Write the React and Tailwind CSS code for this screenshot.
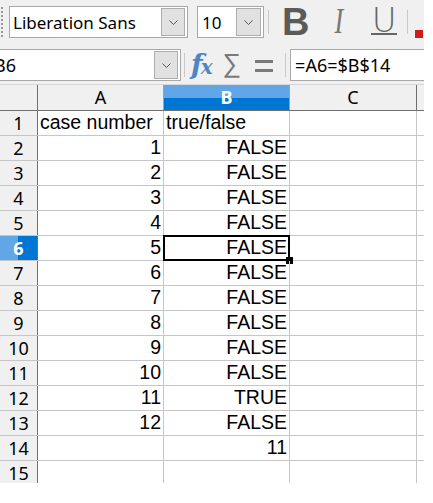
import React from 'react';

const Chevron = () => (
    <svg width="9" height="5" viewBox="0 0 9 5" fill="none">
        <path d="M0.5 0.5 L4.5 4.5 L8.5 0.5" stroke="#555" strokeWidth="1" />
    </svg>
);

const DropButton = ({ className }) => (
    <div className={`flex items-center justify-center bg-[#e1e1e1] border border-[#adadad] ${className}`}>
        <Chevron />
    </div>
);

const Sep = ({ className }) => <div className={`w-px bg-[#c8c8c8] ${className}`}></div>;

const rows = [
    ['case number', 'true/false'],
    ['1', 'FALSE'],
    ['2', 'FALSE'],
    ['3', 'FALSE'],
    ['4', 'FALSE'],
    ['5', 'FALSE'],
    ['6', 'FALSE'],
    ['7', 'FALSE'],
    ['8', 'FALSE'],
    ['9', 'FALSE'],
    ['10', 'FALSE'],
    ['11', 'TRUE'],
    ['12', 'FALSE'],
    ['', '11'],
    ['', ''],
];

const App = () => {
    return (
        <div className="w-[433px] h-[503px] bg-white overflow-hidden">
            <div className="w-[424px] h-[483px] overflow-hidden bg-[#f0f0f0] flex flex-col font-['Noto_Sans',sans-serif]">
                {/* Toolbar: font */}
                <div className="h-[43px] flex items-start pt-[6px] shrink-0">
                    <div className="w-[3px] h-[30px] mt-[1px] ml-[1px] border-l-2 border-dotted border-[#9a9a9a]"></div>
                    <div className="ml-[5px] w-[179px] h-[32px] bg-white border border-[#a8a8a8] flex items-center justify-between pl-[3px] pr-[2px]">
                        <span className="text-[17px] text-black leading-none">Liberation Sans</span>
                        <DropButton className="w-[24px] h-[28px]" />
                    </div>
                    <div className="ml-[9px] w-[67px] h-[32px] bg-white border border-[#a8a8a8] flex items-center justify-between pl-[4px] pr-[2px]">
                        <span className="text-[17px] text-black leading-none">10</span>
                        <DropButton className="w-[25px] h-[28px]" />
                    </div>
                    <Sep className="ml-[4px] mt-[4px] h-[24px]" />
                    <span className="ml-[13px] -mt-[3px] text-[38px] leading-none font-bold text-[#5a5a5a] font-['Liberation_Sans',sans-serif]">B</span>
                    <span className="ml-[24px] -mt-[2px] text-[35px] leading-none text-[#777] font-['Liberation_Serif',serif] italic scale-x-75">I</span>
                    <div className="ml-[26px] flex flex-col items-center">
                        <span className="-mt-[3px] text-[34px] leading-none text-[#666] font-['DejaVu_Sans',sans-serif] font-light">U</span>
                        <div className="w-[26px] h-[2px] bg-[#666] -mt-[4px]"></div>
                    </div>
                    <Sep className="ml-[10px] mt-[4px] h-[24px]" />
                    <div className="ml-[7px] mt-[24px] w-[8px] h-[8px] bg-[#d11c1c]"></div>
                </div>

                {/* Formula bar */}
                <div className="h-[40px] flex items-start pt-[6px] shrink-0">
                    <div className="w-[181px] h-[32px] bg-white border border-[#a8a8a8] border-l-0 flex items-center justify-between pr-[2px] overflow-hidden">
                        <span className="-ml-[6px] text-[18px] text-black leading-none">B6</span>
                        <DropButton className="w-[24px] h-[28px]" />
                    </div>
                    <Sep className="ml-[3px] mt-[4px] h-[24px]" />
                    <span className="ml-[6px] mt-[2px] text-[27px] leading-none font-bold italic text-[#4d86c4] font-['DejaVu_Serif',serif] tracking-[-2px]">f<span className="text-[20px]">x</span></span>
                    <span className="ml-[12px] mt-[1px] text-[26px] leading-none text-[#7a7a7a] font-['DejaVu_Sans',sans-serif] font-light">∑</span>
                    <div className="ml-[14px] mt-[11px] flex flex-col gap-[6px]">
                        <div className="w-[18px] h-[3px] bg-[#7a7a7a]"></div>
                        <div className="w-[18px] h-[3px] bg-[#7a7a7a]"></div>
                    </div>
                    <Sep className="ml-[12px] mt-[4px] h-[24px]" />
                    <div className="ml-[4px] flex-1 h-[32px] bg-white border border-[#a8a8a8] border-r-0 flex items-center pl-[4px]">
                        <span className="text-[18px] text-black leading-none">=A6=$B$14</span>
                    </div>
                </div>

                {/* Grid */}
                <div className="flex-1 flex flex-col mt-[1px]">
                    {/* Column headers */}
                    <div className="flex h-[27px] shrink-0 border-t border-[#d8d8d8] border-b border-b-[#707070] text-[18px]">
                        <div className="w-[38px] bg-[#f0f0f0] border-r border-[#707070]"></div>
                        <div className="w-[126px] bg-[#f0f0f0] border-r border-[#a0a0a0] flex items-center justify-center text-black">A</div>
                        <div className="w-[126px] border-r border-[#a0a0a0] relative flex flex-col">
                            <div className="h-[13px] bg-[#61a6e6]"></div>
                            <div className="flex-1 bg-[#0076d4]"></div>
                            <span className="absolute inset-0 flex items-center justify-center font-bold text-white">B</span>
                        </div>
                        <div className="w-[127px] bg-[#f0f0f0] border-r border-[#707070] flex items-center justify-center text-black">C</div>
                        <div className="flex-1 bg-[#f0f0f0]"></div>
                    </div>

                    {rows.map((r, i) => {
                        const n = i + 1;
                        const sel = n === 6;
                        return (
                            <div key={n} className="flex h-[25px] shrink-0 border-b border-[#c6c6c6] bg-white">
                                <div className={`w-[38px] border-r border-[#707070] relative flex items-center justify-center text-[18px] ${sel ? 'bg-[#0076d4] text-white font-bold' : 'bg-[#f0f0f0] text-black'}`}>
                                    {sel && <div className="absolute left-0 top-0 bottom-0 w-[18px] bg-[#61a6e6]"></div>}
                                    <span className="relative">{n}</span>
                                </div>
                                <div className={`w-[126px] border-r border-[#c6c6c6] flex items-center px-[2px] text-[19.5px] text-black font-['Liberation_Sans',sans-serif] ${n === 1 ? 'justify-start' : 'justify-end'}`}>
                                    {r[0]}
                                </div>
                                <div className={`w-[126px] border-r border-[#c6c6c6] relative flex items-center px-[2px] text-[19.5px] text-black font-['Liberation_Sans',sans-serif] ${n === 1 ? 'justify-start' : 'justify-end'}`}>
                                    {r[1]}
                                    {sel && (
                                        <>
                                            <div className="absolute -left-px -top-px w-[127px] h-[26px] border-2 border-black"></div>
                                            <div className="absolute -right-[4px] -bottom-[4px] w-[7px] h-[7px] bg-black"></div>
                                        </>
                                    )}
                                </div>
                                <div className="w-[127px] border-r border-[#c6c6c6]"></div>
                                <div className="flex-1"></div>
                            </div>
                        );
                    })}
                </div>
            </div>
        </div>
    );
};

export default App;
